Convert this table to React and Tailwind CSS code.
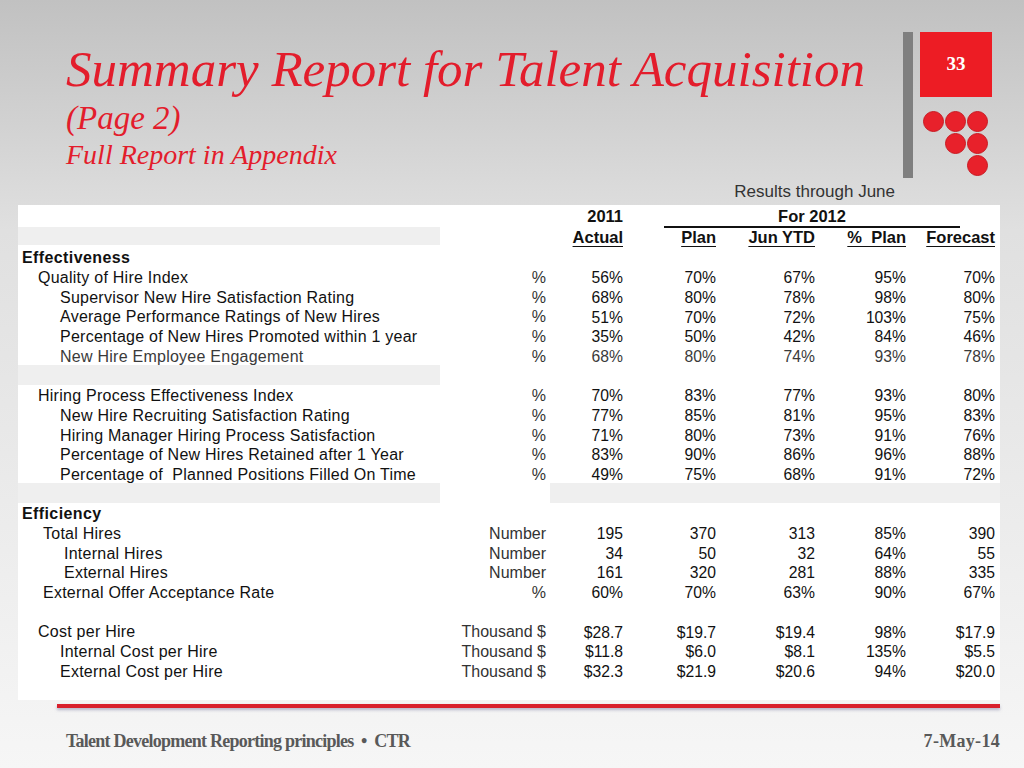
import React from 'react';

const COLS = 'grid grid-cols-[422px_110px_77px_93px_99px_91px_90px]';

const rows = [
  { label: 'Effectiveness', bold: true, pad: 'pl-[4px]' },
  { label: 'Quality of Hire Index', pad: 'pl-[20px]', unit: '%', v: ['56%', '70%', '67%', '95%', '70%'] },
  { label: 'Supervisor New Hire Satisfaction Rating', pad: 'pl-[42px]', unit: '%', v: ['68%', '80%', '78%', '98%', '80%'] },
  { label: 'Average Performance Ratings of New Hires', pad: 'pl-[42px]', unit: '%', v: ['51%', '70%', '72%', '103%', '75%'] },
  { label: 'Percentage of New Hires Promoted within 1 year', pad: 'pl-[42px]', unit: '%', v: ['35%', '50%', '42%', '84%', '46%'] },
  { label: 'New Hire Employee Engagement', pad: 'pl-[42px]', unit: '%', v: ['68%', '80%', '74%', '93%', '78%'], soft: true },
  { blank: 'left' },
  { label: 'Hiring Process Effectiveness Index', pad: 'pl-[20px]', unit: '%', v: ['70%', '83%', '77%', '93%', '80%'] },
  { label: 'New Hire Recruiting Satisfaction Rating', pad: 'pl-[42px]', unit: '%', v: ['77%', '85%', '81%', '95%', '83%'] },
  { label: 'Hiring Manager Hiring Process Satisfaction', pad: 'pl-[42px]', unit: '%', v: ['71%', '80%', '73%', '91%', '76%'] },
  { label: 'Percentage of New Hires Retained after 1 Year', pad: 'pl-[42px]', unit: '%', v: ['83%', '90%', '86%', '96%', '88%'] },
  { label: 'Percentage of  Planned Positions Filled On Time', pad: 'pl-[42px]', unit: '%', v: ['49%', '75%', '68%', '91%', '72%'] },
  { blank: 'split' },
  { label: 'Efficiency', bold: true, pad: 'pl-[4px]' },
  { label: 'Total Hires', pad: 'pl-[25px]', unit: 'Number', v: ['195', '370', '313', '85%', '390'] },
  { label: 'Internal Hires', pad: 'pl-[46px]', unit: 'Number', v: ['34', '50', '32', '64%', '55'] },
  { label: 'External Hires', pad: 'pl-[46px]', unit: 'Number', v: ['161', '320', '281', '88%', '335'] },
  { label: 'External Offer Acceptance Rate', pad: 'pl-[25px]', unit: '%', v: ['60%', '70%', '63%', '90%', '67%'] },
  { blank: 'none' },
  { label: 'Cost per Hire', pad: 'pl-[20px]', unit: 'Thousand $', v: ['$28.7', '$19.7', '$19.4', '98%', '$17.9'] },
  { label: 'Internal Cost per Hire', pad: 'pl-[42px]', unit: 'Thousand $', v: ['$11.8', '$6.0', '$8.1', '135%', '$5.5'] },
  { label: 'External Cost per Hire', pad: 'pl-[42px]', unit: 'Thousand $', v: ['$32.3', '$21.9', '$20.6', '94%', '$20.0'] },
  { blank: 'none' },
];

function Row({ r }) {
  if (r.blank) {
    const band = 'bg-[#efefef]';
    return (
      <div className={`${COLS} h-[19.7px]`}>
        <div className={r.blank === 'none' ? '' : band} />
        <div />
        <div className={`col-span-5 ${r.blank === 'split' ? band : ''}`} />
      </div>
    );
  }
  return (
    <div className={`${COLS} h-[19.7px] pt-[3px] items-center leading-none ${r.soft ? 'text-[#3a3a3a]' : 'text-[#111]'}`}>
      <div className={`${r.pad} ${r.bold ? 'font-bold tracking-[0.4px]' : 'tracking-[0.25px]'} text-[16px] whitespace-pre`}>{r.label}</div>
      <div className="text-right pr-[4px] text-[16px] text-[#333]">{r.unit}</div>
      {(r.v || ['', '', '', '', '']).map((x, i) => (
        <div key={i} className={`text-right text-[15.7px] ${i === 4 ? 'pr-[5px]' : 'pr-[4px]'}`}>{x}</div>
      ))}
    </div>
  );
}

function Logo() {
  const dots = [1, 1, 1, 0, 1, 1, 0, 0, 1];
  return (
    <div className="flex gap-[7px] mr-[32px]">
      <div className="w-[10px] h-[146px] bg-[#7f7f7f]" />
      <div className="flex flex-col">
        <div className="w-[72px] h-[65px] bg-[#ed1c24] flex items-center justify-center text-white font-bold text-[19px] font-['Liberation_Serif',serif]">
          33
        </div>
        <div className="grid grid-cols-[22px_22px_22px] grid-rows-[22px_22px_22px] mt-[13px] ml-[2px]">
          {dots.map((d, i) => (
            <div key={i} className="flex items-center justify-center">
              {d ? <div className="w-[21px] h-[21px] rounded-full bg-[#e8212b] border border-[#c81a22]" /> : null}
            </div>
          ))}
        </div>
      </div>
    </div>
  );
}

export default function App() {
  return (
    <div className="w-[1024px] h-[768px] overflow-hidden flex flex-col bg-gradient-to-b from-[#c1c1c1] via-[#e0e0e0] via-30% to-[#f6f6f6] font-['Liberation_Sans',Arial,sans-serif]">
      <div className="flex pt-[32px]">
        <div className="pl-[66px] pt-[8px] text-[#e31d2c] italic font-['Liberation_Serif','Times_New_Roman',serif]">
          <div className="text-[51px] leading-[58px]">Summary Report for Talent Acquisition</div>
          <div className="text-[33px] leading-[38px] mt-[1px]">(Page 2)</div>
          <div className="text-[28px] leading-[34px] mt-[1px]">Full Report in Appendix</div>
        </div>
        <div className="ml-auto">
          <Logo />
        </div>
      </div>

      <div className="flex justify-end pr-[129px] h-[27px] items-center text-[17px] text-[#333]">
        Results through June
      </div>

      <div className="ml-[18px] w-[982px] bg-white">
        <div className={`${COLS} h-[22px] items-center font-bold text-[16.5px] text-[#111] leading-none`}>
          <div />
          <div />
          <div className="text-right pr-[4px]">2011</div>
          <div className="col-span-4 pl-[37px] pr-[40px] h-full flex items-center">
            <div className="w-full text-center border-b-2 border-[#111] pb-[1px] mt-[3px]">For 2012</div>
          </div>
        </div>
        <div className={`${COLS} h-[20px] items-center font-bold text-[16.5px] text-[#111] leading-none`}>
          <div className="bg-[#efefef] h-[18px] self-start" />
          <div />
          <div className="text-right pr-[4px] underline underline-offset-[3px]">Actual</div>
          <div className="text-right pr-[4px] underline underline-offset-[3px]">Plan</div>
          <div className="text-right pr-[4px] underline underline-offset-[3px]">Jun YTD</div>
          <div className="text-right pr-[4px] underline underline-offset-[3px] whitespace-pre">%  Plan</div>
          <div className="text-right pr-[5px] underline underline-offset-[3px]">Forecast</div>
        </div>
        {rows.map((r, i) => (
          <Row key={i} r={r} />
        ))}
      </div>

      <div className="ml-[57px] w-[943px] mt-[4px] h-[4px] bg-[#d8202c] shadow-[0_2px_3px_rgba(120,120,160,0.5)]" />

      <div className="flex justify-between items-center pl-[66px] pr-[24px] mt-[20px] text-[#595959] font-bold text-[18px] font-['Liberation_Serif','Times_New_Roman',serif]">
        <div className="tracking-[-0.75px] whitespace-pre">Talent Development Reporting principles  •  CTR</div>
        <div className="tracking-[0.3px]">7-May-14</div>
      </div>
    </div>
  );
}
